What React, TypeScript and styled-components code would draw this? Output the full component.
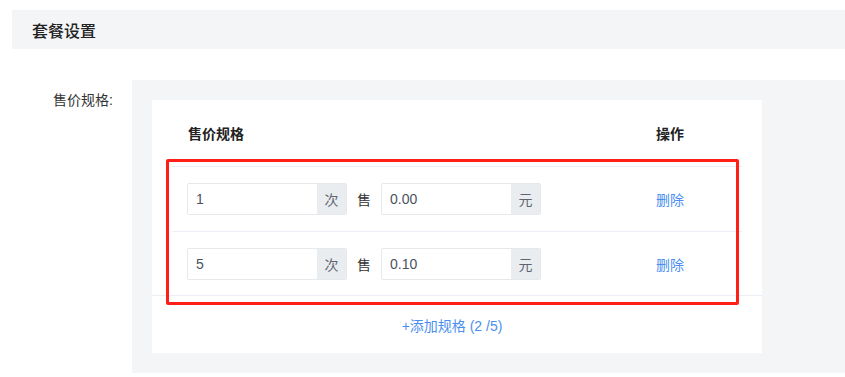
import React from 'react';
import styled, { createGlobalStyle } from 'styled-components';

const GlobalStyle = createGlobalStyle`
    body {
        margin: 0;
        background: #fff;
        font-family: "Liberation Sans", "Noto Sans CJK SC", sans-serif;
        color: #333;
    }
`;

const Page = styled.div`
    padding: 10px 0 0 12px;
`;

const SectionHeader = styled.div`
    height: 39px;
    display: flex;
    align-items: center;
    padding-left: 20px;
    background: #f4f5f7;
    font-size: 16px;
    font-weight: 500;
    color: #222;
`;

const FormRow = styled.div`
    display: flex;
    margin-top: 31px;
`;

const FormLabel = styled.div`
    width: 120px;
    flex-shrink: 0;
    box-sizing: border-box;
    padding: 9px 19px 0 0;
    text-align: right;
    font-size: 14px;
    color: #333;
`;

const Panel = styled.div`
    flex: 1;
    background: #f4f5f7;
    padding: 20px 83px 20px 20px;
`;

const Card = styled.div`
    position: relative;
    background: #fff;
    width: 610px;
`;

const Table = styled.div`
    margin: 0 20px;
`;

const Row = styled.div<{ $height: number; $last?: boolean }>`
    display: grid;
    grid-template-columns: 484px 1fr;
    align-items: center;
    height: ${(p) => p.$height}px;
    border-bottom: ${(p) => (p.$last ? 'none' : '1px solid #ebeef5')};
`;

const HeadCell = styled.div<{ $pad?: number }>`
    padding-left: ${(p) => p.$pad ?? 0}px;
    font-size: 14px;
    font-weight: 700;
    color: #222;
`;

const SpecCell = styled.div`
    display: flex;
    align-items: center;
    padding-left: 15px;
`;

const InputGroup = styled.div`
    display: flex;
    width: 160px;
    height: 32px;
    box-sizing: border-box;
    border: 1px solid #e6e8ec;
    border-radius: 2px;
    overflow: hidden;
`;

const Input = styled.div`
    flex: 1;
    display: flex;
    align-items: center;
    padding-left: 8px;
    font-size: 14px;
    color: #4a5260;
    background: #fff;
`;

const Addon = styled.div`
    width: 29px;
    display: flex;
    align-items: center;
    justify-content: center;
    background: #eaedf0;
    font-size: 14px;
    color: #5f6570;
`;

const Sep = styled.span`
    width: 34px;
    text-align: center;
    font-size: 14px;
    color: #333;
`;

const LinkText = styled.span`
    font-size: 14px;
    color: #4a8ff0;
    cursor: pointer;
`;

const Footer = styled.div`
    height: 57px;
    display: flex;
    align-items: center;
    justify-content: center;
    padding-right: 10px;
    border-top: 1px solid #ebeef5;
`;

const Highlight = styled.div`
    position: absolute;
    left: 14px;
    top: 59px;
    width: 573px;
    height: 146px;
    box-sizing: border-box;
    border: 3px solid #ff1f17;
    border-radius: 2px;
    pointer-events: none;
`;

const specs = [
    { count: '1', price: '0.00' },
    { count: '5', price: '0.10' },
];

const App = () => {
    return (
        <Page>
            <GlobalStyle />
            <SectionHeader>套餐设置</SectionHeader>
            <FormRow>
                <FormLabel>售价规格:</FormLabel>
                <Panel>
                    <Card>
                        <Table>
                            <Row $height={66}>
                                <HeadCell $pad={16}>售价规格</HeadCell>
                                <HeadCell>操作</HeadCell>
                            </Row>
                            {specs.map((s, i) => (
                                <Row
                                    key={i}
                                    $height={i === 0 ? 64 : 63}
                                    $last={i === specs.length - 1}
                                >
                                    <SpecCell>
                                        <InputGroup>
                                            <Input>{s.count}</Input>
                                            <Addon>次</Addon>
                                        </InputGroup>
                                        <Sep>售</Sep>
                                        <InputGroup>
                                            <Input>{s.price}</Input>
                                            <Addon>元</Addon>
                                        </InputGroup>
                                    </SpecCell>
                                    <div>
                                        <LinkText>删除</LinkText>
                                    </div>
                                </Row>
                            ))}
                        </Table>
                        <Footer>
                            <LinkText>+添加规格 (2 /5)</LinkText>
                        </Footer>
                        <Highlight />
                    </Card>
                </Panel>
            </FormRow>
        </Page>
    );
};

export default App;
